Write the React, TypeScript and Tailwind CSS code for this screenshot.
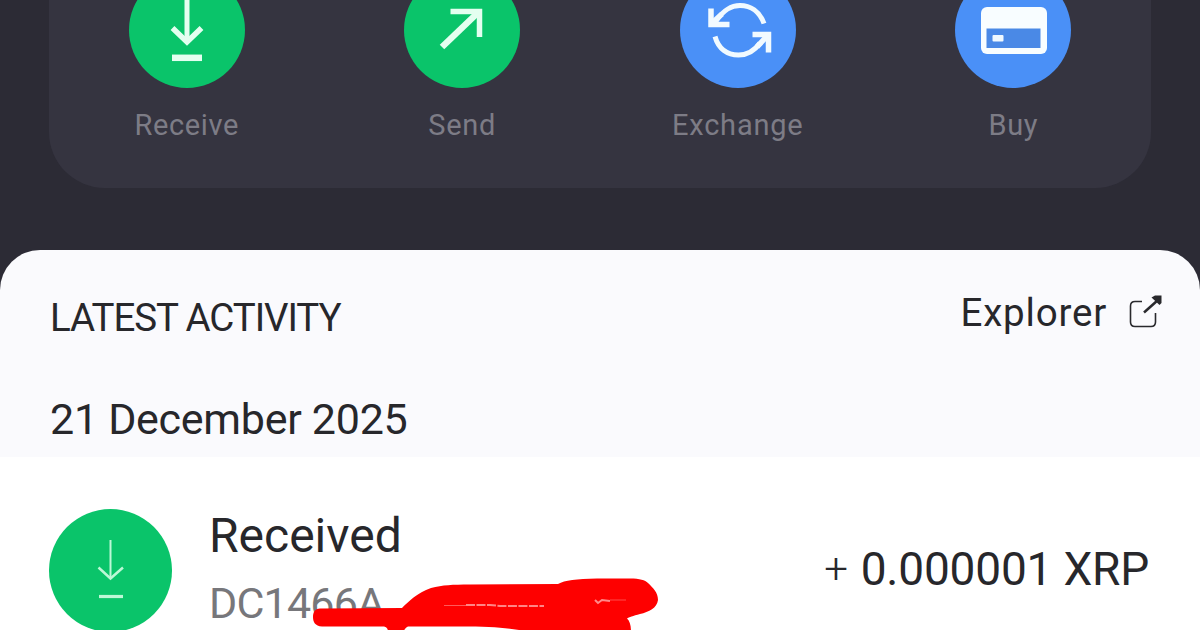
import React from 'react';

interface Action {
  label: string;
  color: string;
  labelClass: string;
  icon: React.ReactNode;
}

const ReceiveIcon = () => (
  <svg viewBox="0 0 116 116" className="w-full h-full" fill="none" stroke="#e4fff0" strokeWidth="5">
    <path d="M58 24V70" />
    <path d="M43.5 56L58 70L72.5 56" strokeWidth="5.5" />
    <path d="M43 85.8H73" strokeWidth="6.5" />
  </svg>
);

const SendIcon = () => (
  <svg viewBox="0 0 116 116" className="w-full h-full" fill="none" stroke="#e4fff0" strokeWidth="6.5">
    <path d="M38 75L73 41.5" />
    <path d="M46.5 39.5H75.5V65" strokeWidth="5.5" />
  </svg>
);

const ExchangeIcon = () => (
  <svg viewBox="0 0 116 116" className="w-full h-full" fill="none" stroke="#f1faff" strokeWidth="5">
    <path d="M84 51.5C79.5 39 70 33.5 60 33.5C51 33.5 44 37.5 36 49" />
    <path d="M31 36.5V52.5H49.5" strokeWidth="5.5" />
    <path d="M35 64.5C38.5 77 47.5 83 58.5 83C67 83 74 79.5 80 71" />
    <path d="M72.5 62.5H88.5V80.5" strokeWidth="5.5" />
    <path d="M31 52L42 42M77 75L88 63" strokeWidth="5.5" />
  </svg>
);

const CardIcon = () => (
  <svg viewBox="0 0 116 116" className="w-full h-full">
    <rect x="26" y="35" width="66" height="47" rx="6" fill="#f8fdff" />
    <rect x="31.5" y="56.5" width="54" height="19.5" fill="#4a89e6" />
    <rect x="37.5" y="63" width="11" height="6.5" rx="1" fill="#f0f9ff" />
  </svg>
);

const actions: Action[] = [
  { label: 'Receive', color: 'bg-[#0ac46a]', labelClass: 'tracking-[0.6px]', icon: <ReceiveIcon /> },
  { label: 'Send', color: 'bg-[#0ac46a]', labelClass: 'tracking-[0.7px]', icon: <SendIcon /> },
  { label: 'Exchange', color: 'bg-[#4a90f7]', labelClass: 'tracking-[0.8px]', icon: <ExchangeIcon /> },
  { label: 'Buy', color: 'bg-[#4a90f7]', labelClass: 'tracking-[0.5px]', icon: <CardIcon /> },
];

const Actions = () => (
  <div className="h-[188px] mx-[49px] rounded-b-[56px] bg-[#353440] grid grid-cols-4">
    {actions.map((action) => (
      <div key={action.label} className="flex flex-col items-center">
        <div className={`-mt-7 size-[116px] shrink-0 rounded-full ${action.color}`}>{action.icon}</div>
        <span className={`mt-5 text-[29px] leading-[34px] text-[#7d7c86] ${action.labelClass}`}>{action.label}</span>
      </div>
    ))}
  </div>
);

const Scribble = () => (
  <svg className="absolute left-[310px] top-[118px] w-[350px] h-[56px]" viewBox="310 575 350 56">
    <path
      fill="#fe0000"
      d="M320 608.5L402 608C409 601 417 593 431 588C443 585 452 584.5 470 584.5L558 584C565 580 576 579 597 578.5H630C640 578.5 645 580 648 583C653 588 658 592 658 600C657 608 649 612 640 614C633 616 629 617 627 618.5C630 621 631 626 631 632H530C510 628 495 626.5 460 626.5H408C405 628 404 630 404 632H388C388 629 387 627 384 626.5H322C315 626 313 622 313 617C313 612 315 609 320 608.5Z"
    />
    <path d="M444 605.5H466" stroke="#ff5a5a" strokeWidth="1" />
    <path d="M466 605H490L500 606H544" fill="none" stroke="#ff8585" strokeWidth="2" strokeDasharray="9 1.5" />
    <path d="M595 600L598 603L602 600L610 601" fill="none" stroke="#ff8a8a" strokeWidth="2" />
    <path d="M610 600H626" stroke="#ff4a4a" strokeWidth="1" />
  </svg>
);

const App: React.FC = () => {
  return (
    <div className="w-[1200px] h-[630px] overflow-hidden bg-[#2c2b35] font-['Roboto',sans-serif]">
      <Actions />

      <section className="mt-[62px] h-[380px] rounded-t-[40px] bg-[#fafafd] text-[#27272b] overflow-hidden">
        <div className="flex justify-between pt-11 pl-[50px] pr-[37px]">
          <h2 className="mt-[1px] text-[38.5px] leading-[46px] tracking-[-1.1px] whitespace-nowrap">LATEST ACTIVITY</h2>
          <a className="-mt-1 flex text-[38.5px] leading-[46px] tracking-[0.8px]">
            Explorer
            <svg className="ml-5 mt-1 w-9 h-9" viewBox="0 0 36 36" fill="none" stroke="#29292d" strokeWidth="2">
              <path d="M15 7.5H8Q3.500 7.500 3.500 12V28Q3.500 32.500 8 32.500H24Q28.500 32.500 28.500 28V19" strokeWidth="1.600" />
              <path d="M17 18.5L31 6" strokeWidth="2.500" />
              <path d="M24.5 3.5L28 1.500H34.500V9L32.500 11Z" fill="#29292d" stroke="none" />
            </svg>
          </a>
        </div>
        <h3 className="mt-[53px] pl-[50px] text-[43px] leading-[50px] tracking-[-0.28px]">21 December 2025</h3>

        <div className="relative mt-[13px] h-[174px] bg-white flex pl-[49px] pr-[51px]">
          <div className="mt-[52px] size-[123px] shrink-0 rounded-full bg-[#0ac46a]">
            <svg viewBox="0 0 123 123" className="w-full h-full" fill="none" stroke="#bdf8d6" strokeWidth="2">
              <path d="M61.5 31V69" />
              <path d="M49.5 58.5L61.5 69.5L74 58.5" strokeWidth="2.5" />
              <path d="M50 87.5H74" strokeWidth="3.2" />
            </svg>
          </div>
          <div className="ml-[37px] mt-[51px] flex flex-col">
            <span className="text-[48px] leading-[56px]">Received</span>
            <span className="mt-[14px] text-[43px] leading-[50px] tracking-[-0.8px] text-[#77777b]">DC1466A</span>
          </div>
          <div className="ml-auto mt-[85px] flex text-[46px] leading-[54px] tracking-[-0.2px] whitespace-nowrap">
            <span className="mr-[13px] text-[42px] font-light">+</span>
            <span>0.000001 XRP</span>
          </div>
          <Scribble />
        </div>
      </section>
    </div>
  );
};

export default App;
